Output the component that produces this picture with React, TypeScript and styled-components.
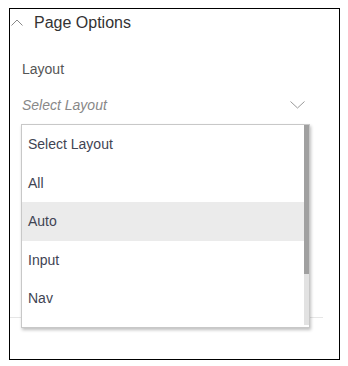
import styled, { createGlobalStyle } from 'styled-components';

const GlobalStyle = createGlobalStyle`
  html, body {
    margin: 0;
    padding: 0;
    background: #fff;
  }
  body {
    padding: 8px 0 0 9px;
    font-family: "Liberation Sans", Arial, sans-serif;
  }
`;

const Panel = styled.section`
  position: relative;
  box-sizing: border-box;
  width: 331px;
  height: 352px;
  border: 1px solid #000;
  background: #fff;
`;

const Header = styled.div`
  display: flex;
  align-items: center;
  gap: 11px;
  padding: 4px 0 0 1px;
  height: 19px;
  line-height: 19px;
  font-size: 16px;
  color: #333;
`;

const Body = styled.div`
  padding: 29px 34px 0 12px;
`;

const Label = styled.div`
  font-size: 14px;
  line-height: 16px;
  color: #555;
`;

const SelectField = styled.div`
  position: relative;
  display: flex;
  align-items: center;
  justify-content: space-between;
  margin-top: 20px;
  height: 16px;
`;

const Placeholder = styled.span`
  font-size: 14px;
  line-height: 16px;
  font-style: italic;
  color: #888;
`;

const Menu = styled.div`
  position: absolute;
  left: -1px;
  top: 27px;
  box-sizing: border-box;
  width: 289px;
  height: 204px;
  display: flex;
  border: 1px solid #c8c8c8;
  background: #fff;
  box-shadow: 1px 2px 3px rgba(0, 0, 0, 0.25);
  overflow: hidden;
  z-index: 2;
`;

const OptionList = styled.ul`
  flex: 1;
  margin: 0;
  padding: 0;
  list-style: none;
`;

const Option = styled.li<{ $active?: boolean }>`
  display: flex;
  align-items: center;
  height: 38.5px;
  padding-left: 6px;
  font-size: 14px;
  color: #3f4453;
  background: ${(p) => (p.$active ? '#ebebeb' : 'transparent')};
`;

const ScrollTrack = styled.div`
  width: 5px;
  display: flex;
  flex-direction: column;
  background: #e2e2e2;
  margin-bottom: 2px;
`;

const ScrollThumb = styled.div`
  height: 149px;
  background: #a0a0a0;
`;

const Divider = styled.div`
  height: 1px;
  margin: 204px 16px 0 0;
  background: #e6e6e6;
`;

const ChevronUp = () => (
  <svg width="12" height="7" viewBox="0 0 12 7" fill="none">
    <polyline points="0.5,6.5 6,1 11.5,6.5" stroke="#888" strokeWidth="1" />
  </svg>
);

const ChevronDown = () => (
  <svg width="15" height="8" viewBox="0 0 15 8" fill="none">
    <polyline points="0.5,0.5 7.5,7 14.5,0.5" stroke="#999" strokeWidth="1" />
  </svg>
);

const options = ['Select Layout', 'All', 'Auto', 'Input', 'Nav'];

const App = () => {
  return (
    <>
      <GlobalStyle />
      <Panel>
        <Header>
          <ChevronUp />
          <span>Page Options</span>
        </Header>
        <Body>
          <Label>Layout</Label>
          <SelectField>
            <Placeholder>Select Layout</Placeholder>
            <ChevronDown />
            <Menu>
              <OptionList>
                {options.map((o) => (
                  <Option key={o} $active={o === 'Auto'}>
                    {o}
                  </Option>
                ))}
              </OptionList>
              <ScrollTrack>
                <ScrollThumb />
              </ScrollTrack>
            </Menu>
          </SelectField>
        </Body>
        <Divider />
      </Panel>
    </>
  );
};

export default App;
